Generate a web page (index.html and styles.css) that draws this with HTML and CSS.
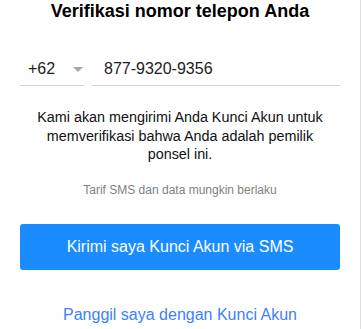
FILE: index.html
```html
<!DOCTYPE html>
<html lang="id">
<head>
    <meta charset="UTF-8">
    <meta name="viewport" content="width=device-width, initial-scale=1.0">
    <title>Verifikasi nomor telepon Anda</title>
    <link rel="stylesheet" href="styles.css">
</head>
<body>
    <div class="panel">
        <h1 class="title">Verifikasi nomor telepon Anda</h1>

        <!-- nomor telepon -->
        <div class="phone-row">
            <div class="country">
                <span class="code">+62</span>
                <span class="caret"></span>
            </div>
            <div class="number">877-9320-9356</div>
        </div>

        <p class="desc">Kami akan mengirimi Anda Kunci Akun untuk memverifikasi bahwa Anda adalah pemilik ponsel ini.</p>
        <p class="note">Tarif SMS dan data mungkin berlaku</p>

        <button class="btn-primary">Kirimi saya Kunci Akun via SMS</button>
        <a class="link" href="#">Panggil saya dengan Kunci Akun</a>
    </div>
</body>
</html>
```

FILE: styles.css
```css
/* global */
body, html {
    margin: 0;
    padding: 0;
    background: #fff;
    font-family: 'Liberation Sans', Arial, sans-serif;
    overflow: hidden;
}

.panel {
    width: 361px;
    height: 329px;
    padding: 0 20px;
    box-sizing: border-box;
    border-right: 1px solid #dddddd;
    display: flex;
    flex-direction: column;
}

.title {
    margin: 0;
    font-size: 18px;
    line-height: 22px;
    font-weight: bold;
    color: #000;
    text-align: center;
}

/* phone input row */
.phone-row {
    display: flex;
    gap: 8px;
    margin-top: 37px;
}

.country {
    width: 64px;
    display: flex;
    align-items: center;
    padding: 0 0 6px 8px;
    box-sizing: border-box;
    border-bottom: 1px solid #d4d4d4;
}

.code {
    font-size: 16px;
    color: #1d1d1d;
    line-height: 20px;
}

.caret {
    margin-left: 18px;
    width: 0;
    height: 0;
    border-left: 5px solid transparent;
    border-right: 5px solid transparent;
    border-top: 5px solid #a6a6a6;
}

.number {
    flex: 1;
    padding: 0 0 6px 12px;
    font-size: 16px;
    line-height: 20px;
    color: #1d1d1d;
    border-bottom: 1px solid #d4d4d4;
}

.desc {
    margin: 22px 0 0;
    padding: 0 14px;
    font-size: 14.35px;
    line-height: 18.5px;
    color: #111;
    text-align: center;
}

.note {
    margin: 18px 0 0;
    font-size: 12px;
    line-height: 16px;
    color: #7f7f7f;
    text-align: center;
}

.btn-primary {
    margin-top: 26px;
    height: 46px;
    border: none;
    border-radius: 3px;
    background: #1a8cff;
    color: #fff;
    font-family: inherit;
    font-size: 16px;
}

.link {
    margin-top: 35px;
    font-size: 16px;
    line-height: 20px;
    color: #4080ff;
    text-decoration: none;
    text-align: center;
}
```
